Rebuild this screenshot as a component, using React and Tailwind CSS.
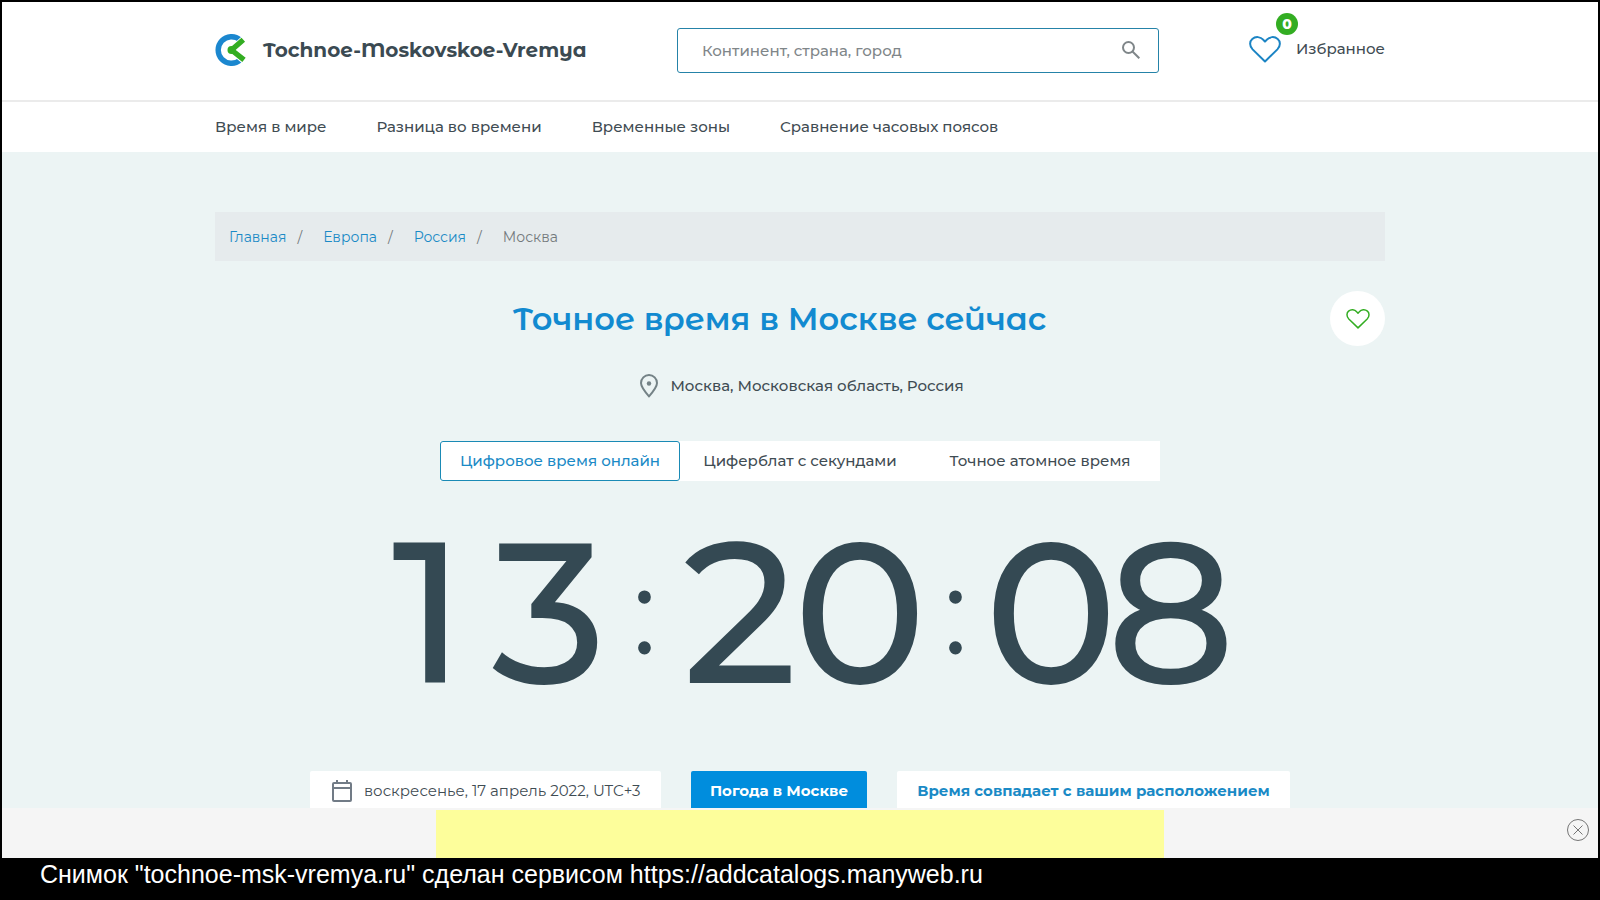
import React, { useState } from 'react';

const navLinks = ['Время в мире', 'Разница во времени', 'Временные зоны', 'Сравнение часовых поясов'];
const crumbs = ['Главная', 'Европа', 'Россия'];
const tabs = ['Цифровое время онлайн', 'Циферблат с секундами', 'Точное атомное время'];

const Heart = ({ className }) => (
  <svg className={className} viewBox="0 0 32 27" fill="none" stroke="currentColor" strokeWidth="2" strokeLinejoin="round">
    <path d="M16 25.5 3.6 13.4C.3 10 .4 5.300 3.300 2.900 6.600.1 11.600.7 14.200 3.700L16 5.600l1.800-1.900C20.400.7 25.400.1 28.700 2.900c2.900 2.400 3 7.100-.3 10.500Z" />
  </svg>
);

const Logo = () => (
  <svg className="h-8 w-8 shrink-0" viewBox="0 0 32 32" fill="none">
    <path d="M25 5.800A13.300 13.300 0 1 0 25 26.200" stroke="#1b87cf" strokeWidth="5.400" />
    <path d="M17 16 30 4.500M17 16 31 27.500" stroke="#fff" strokeWidth="7.500" />
    <path d="M16.500 16 28.300 5.800M16.500 16 29 25.800" stroke="#33ad22" strokeWidth="5.400" />
    <circle cx="16.500" cy="16" r="4" fill="#33ad22" />
  </svg>
);

const Header = () => (
  <header className="shrink-0 bg-white">
    <div className="border-b-2 border-[#ebebeb]">
      <div className="mx-auto flex h-[98px] max-w-[1170px] items-center pb-[2px]">
        <a href="#" className="flex w-[462px] items-center gap-4 font-['Montserrat_Alternates','Montserrat','Inter',sans-serif] text-xl font-bold whitespace-nowrap text-[#3b4a52]">
          <Logo />
          Tochnoe-Moskovskoe-Vremya
        </a>
        <form className="flex h-[45px] w-[482px] items-center rounded-[3px] border border-[#2583a8] pr-[18px] pl-6">
          <input
            type="text"
            aria-label="Поиск"
            placeholder="Континент, страна, город"
            className="min-w-0 flex-1 pt-[2px] text-[15px] font-medium outline-none placeholder:text-[#7f8689]"
          />
          <button type="button" aria-label="Найти" className="text-[#7f8689]">
            <svg className="h-[18px] w-[18px]" viewBox="0 0 18 18" fill="none" stroke="currentColor" strokeWidth="2">
              <circle cx="6.500" cy="6.500" r="5.500" />
              <path d="m10.500 10.500 6.800 6.800" />
            </svg>
          </button>
        </form>
        <a href="#" className="ml-auto flex items-center gap-[15px] pb-[2px] text-[15px] font-medium">
          <span className="relative text-[#1b84c4]">
            <Heart className="h-[27px] w-8" />
            <span className="absolute -top-[23px] left-[27px] flex h-[22px] w-[22px] items-center justify-center rounded-full bg-[#33ad22] text-sm font-extrabold text-white">0</span>
          </span>
          Избранное
        </a>
      </div>
    </div>
    <nav className="mx-auto flex h-[50px] max-w-[1170px] items-center gap-[50px] text-[15px] font-medium">
      {navLinks.map((link) => (
        <a key={link} href="#">{link}</a>
      ))}
    </nav>
  </header>
);

const Clock = ({ parts }) => (
  <div className="mt-[35px] flex items-center justify-center leading-[190px] font-medium text-[#344953]">
    {parts.map((part, i) => (
      <React.Fragment key={i}>
        {i > 0 && <span className="flex w-[71px] justify-center text-[120px] font-normal">:</span>}
        <span className="flex w-60 justify-center text-[200px]">
          {part.split('').map((digit, j) => (
            <span key={j} className="flex w-[120px] justify-center">{digit}</span>
          ))}
        </span>
      </React.Fragment>
    ))}
  </div>
);

const App = () => {
  const [activeTab, setActiveTab] = useState(0); // Выбранный вид часов
  const [showBanner, setShowBanner] = useState(true); // Видимость рекламной полосы

  return (
    <div className="flex h-screen flex-col bg-black pt-[2px] font-['Montserrat','Inter',sans-serif] text-[#3f4c53]">
      <div className="mx-[2px] flex min-h-0 flex-1 flex-col overflow-hidden bg-[#ecf4f4]">
        <Header />

        <main className="mx-auto min-h-0 w-full max-w-[1170px] flex-1 pt-[60px]">
          {/* Хлебные крошки */}
          <ol className="flex h-[49px] items-center bg-[#e6ebed] px-[14px] text-sm text-[#73797c]">
            {crumbs.map((crumb) => (
              <li key={crumb} className="flex">
                <a href="#" className="text-[#1a8ac6]">{crumb}</a>
                <span className="mr-[21px] ml-[11px]">/</span>
              </li>
            ))}
            <li>Москва</li>
          </ol>

          <div className="mt-[30px] flex items-center">
            <h1 className="flex-1 pl-[14px] text-center font-['Montserrat_Alternates','Montserrat','Inter',sans-serif] text-[32px] font-semibold text-[#128ad0]">Точное время в Москве сейчас</h1>
            <button type="button" aria-label="Добавить в избранное" className="flex h-[55px] w-[55px] items-center justify-center rounded-full bg-white text-[#33ad22]">
              <Heart className="h-5 w-6" />
            </button>
          </div>

          <div className="mt-6 flex h-8 items-center justify-center gap-3 pl-1 text-[15px] font-medium">
            <svg className="h-6 w-[18px] text-[#748286]" viewBox="0 0 18 24" fill="none" stroke="currentColor" strokeWidth="2">
              <path d="M9 22.300C4.500 17.200 1 13.100 1 9a8 8 0 0 1 16 0c0 4.100-3.500 8.200-8 13.300Z" />
              <circle cx="9" cy="9.500" r="2.200" fill="currentColor" stroke="none" />
            </svg>
            Москва, Московская область, Россия
          </div>

          {/* Переключатель вида часов */}
          <div className="mx-auto mt-[39px] flex h-10 w-[720px] bg-white text-[15px] font-medium">
            {tabs.map((tab, i) => (
              <button
                key={tab}
                type="button"
                onClick={() => setActiveTab(i)}
                className={`flex-1 rounded-[3px] border whitespace-nowrap ${activeTab === i ? 'border-[#1a8ab5] text-[#1a8ac6]' : 'border-transparent'}`}
              >
                {tab}
              </button>
            ))}
          </div>

          <Clock parts={['13', '20', '08']} />

          <div className="mt-[65px] flex justify-center gap-[30px] text-[15px] whitespace-nowrap">
            <div className="flex h-10 w-[351px] items-center gap-3 rounded-[2px] bg-white pl-[22px]">
              <svg className="h-[22px] w-5 text-[#717b86]" viewBox="0 0 20 22" fill="none" stroke="currentColor" strokeWidth="2">
                <rect x="1" y="3" width="18" height="18" rx="1" />
                <path d="M1 8h18M5 0v3M15 0v3" />
              </svg>
              воскресенье, 17 апрель 2022, UTC+3
            </div>
            <a href="#" className="flex h-10 w-44 items-center justify-center rounded-[2px] bg-[#008ddd] font-bold text-white">Погода в Москве</a>
            <a href="#" className="flex h-10 w-[393px] items-center justify-center rounded-[2px] bg-white font-bold text-[#1a8ac6]">Время совпадает с вашим расположением</a>
          </div>
        </main>
      </div>

      {showBanner && (
        <div className="relative mx-[2px] flex h-[50px] shrink-0 justify-center bg-[#f5f5f5] pt-[2px]">
          <div className="w-[728px] bg-[#fdfe9b]" />
          <button type="button" aria-label="Закрыть" onClick={() => setShowBanner(false)} className="absolute top-[10px] right-2 text-[#757575]">
            <svg className="h-6 w-6" viewBox="0 0 24 24" fill="none" stroke="currentColor">
              <circle cx="12" cy="12" r="10.500" />
              <path d="m7.500 7.500 9 9M16.500 7.500l-9 9" />
            </svg>
          </button>
        </div>
      )}

      <footer className="h-[42px] shrink-0 px-10 font-['Liberation_Sans',Arial,sans-serif] text-[25px] leading-8 text-white">
        Снимок "tochnoe-msk-vremya.ru" сделан сервисом https://addcatalogs.manyweb.ru
      </footer>
    </div>
  );
};

export default App;
